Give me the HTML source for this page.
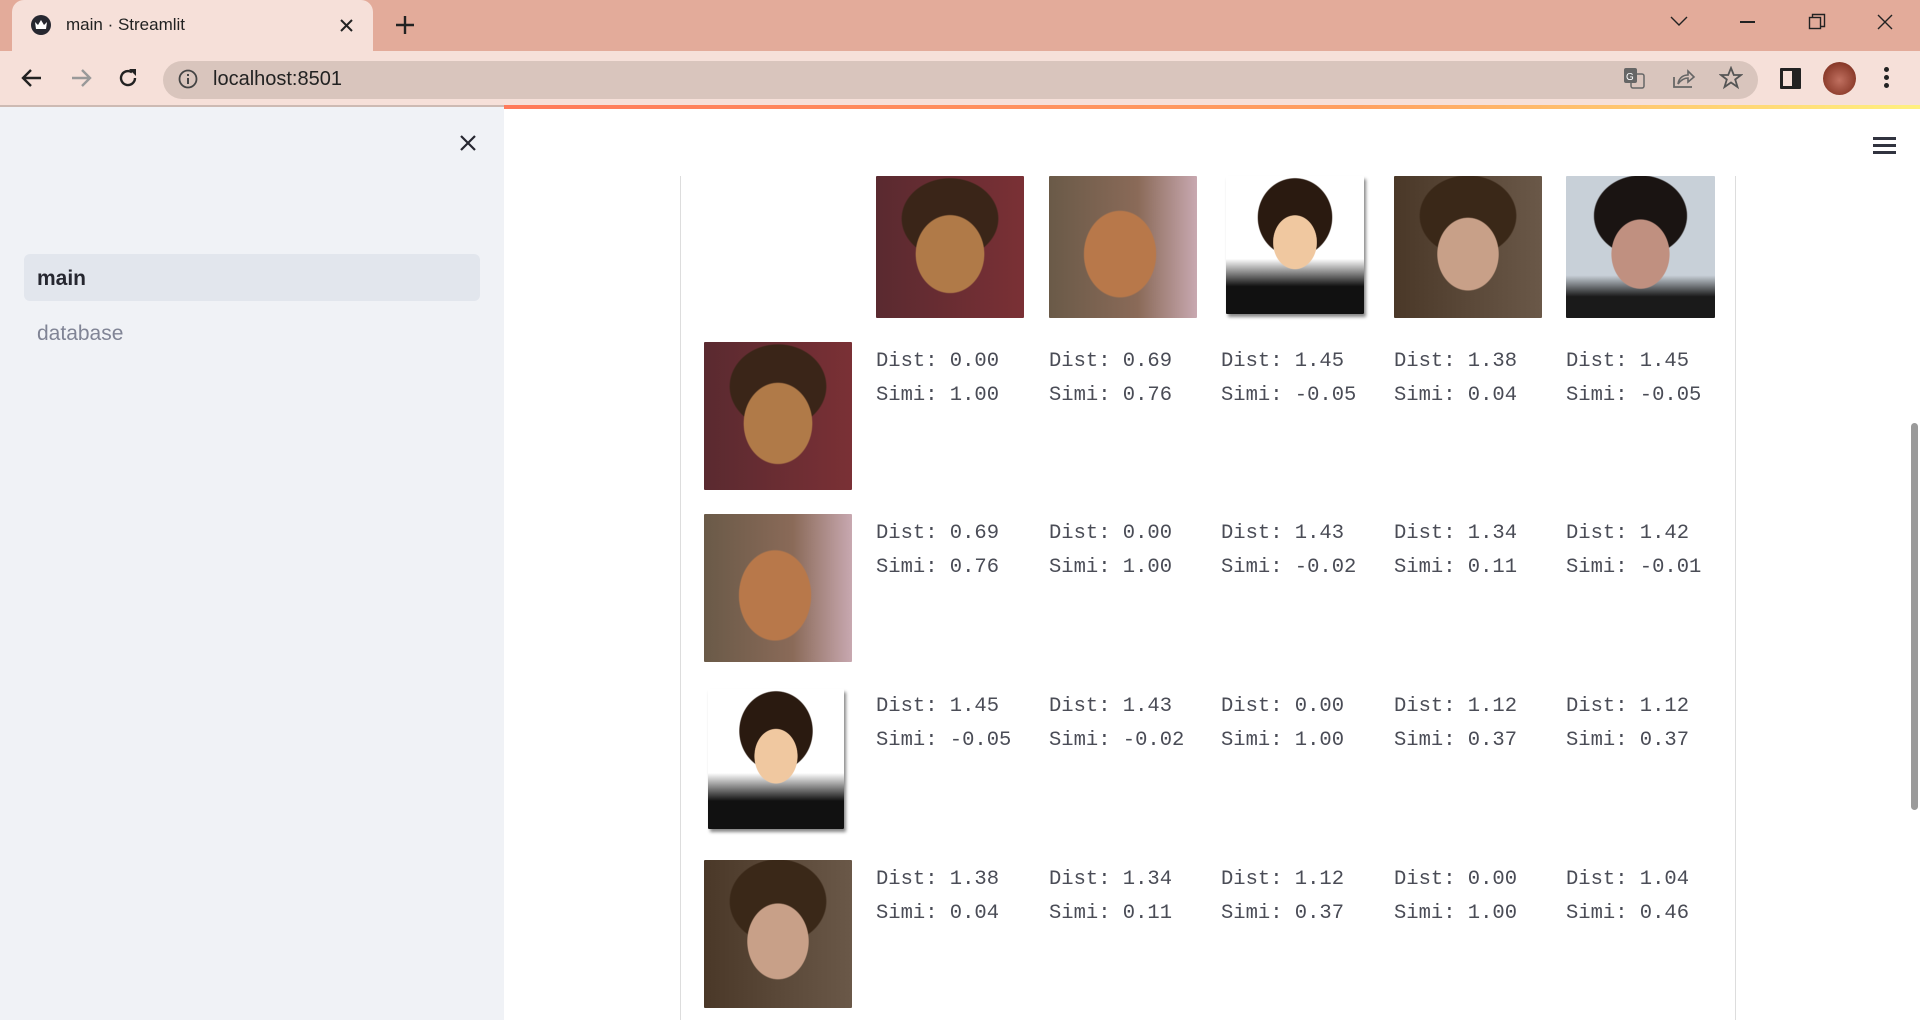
<!DOCTYPE html>
<html><head><meta charset="utf-8"><style>
*{margin:0;padding:0;box-sizing:border-box}
body{width:1920px;height:1020px;overflow:hidden;background:#fff;font-family:"Liberation Sans",sans-serif;position:relative}
.abs{position:absolute}
.tabbar{left:0;top:0;width:1920px;height:51px;background:#e3ab9a}
.tab{left:12px;top:0;width:361px;height:51px;background:#f6e0d9;border-radius:12px 12px 0 0}
.toolbar{left:0;top:51px;width:1920px;height:54px;background:#f6e0d9}
.url{left:163px;top:61px;width:1595px;height:38px;background:#d9c5bd;border-radius:19px}
.side{left:0;top:105px;width:504px;height:915px;background:#f0f2f6;border-top:2px solid #cdbab3}
.mono{font-family:"Liberation Mono",monospace;font-size:20.5px;color:#4a4c56;line-height:34px;white-space:pre}
.face{border-radius:1px}
.f1{background:radial-gradient(ellipse 38% 45% at 50% 55%,#b07a48 60%,transparent 62%),radial-gradient(ellipse 46% 40% at 50% 30%,#3a2518 70%,transparent 72%),linear-gradient(90deg,#5a2a30,#7a3035)}
.f2{background:radial-gradient(ellipse 40% 50% at 48% 55%,#b8784a 60%,transparent 62%),linear-gradient(90deg,#6a5a48,#8a6a58 60%,#c8a8b0)}
.f3{background:radial-gradient(ellipse 26% 32% at 50% 48%,#f0c8a0 60%,transparent 62%),radial-gradient(ellipse 38% 40% at 50% 30%,#2a1a10 70%,transparent 72%),linear-gradient(180deg,#fff 60%,#111 80%)}
.f4{background:radial-gradient(ellipse 34% 42% at 50% 55%,#c8a088 60%,transparent 62%),radial-gradient(ellipse 46% 40% at 50% 28%,#3a2818 70%,transparent 72%),linear-gradient(90deg,#4a3828,#6a5848)}
.f5{background:radial-gradient(ellipse 32% 40% at 50% 55%,#c09080 60%,transparent 62%),radial-gradient(ellipse 44% 40% at 50% 28%,#1a1412 70%,transparent 72%),linear-gradient(180deg,#c8d0d8 70%,#1a1a1a 85%)}
</style></head><body>
<div class="abs tabbar"></div>
<div class="abs tab"></div>
<div class="abs" style="left:31px;top:15px;width:20px;height:20px;border-radius:50%;background:#262730"></div>
<svg class="abs" style="left:35px;top:20px" width="12" height="9"><path d="M0 2 L3 5 L6 0 L9 5 L12 2 L11 9 L1 9Z" fill="#fff"/></svg>
<div class="abs" style="left:66px;top:15px;font-size:17px;color:#222">main · Streamlit</div>
<svg class="abs" style="left:340px;top:19px" width="13" height="13"><path d="M1 1L12 12M12 1L1 12" stroke="#222" stroke-width="2"/></svg>
<svg class="abs" style="left:395px;top:15px" width="20" height="20"><path d="M10 1V19M1 10H19" stroke="#222" stroke-width="2.4"/></svg>
<svg class="abs" style="left:1670px;top:15px" width="18" height="12"><path d="M1 2L9 10L17 2" stroke="#222" stroke-width="1.4" fill="none"/></svg>
<div class="abs" style="left:1740px;top:21px;width:15px;height:1.5px;background:#222"></div>
<svg class="abs" style="left:1808px;top:13px" width="18" height="18"><rect x="1.5" y="4.5" width="11" height="11" stroke="#222" fill="none" stroke-width="1.4"/><path d="M4.5 4.5V1.5H16.5V13.5H12.5" stroke="#222" fill="none" stroke-width="1.4"/></svg>
<svg class="abs" style="left:1877px;top:14px" width="16" height="16"><path d="M1 1L15 15M15 1L1 15" stroke="#222" stroke-width="1.4"/></svg>
<div class="abs toolbar"></div>
<div class="abs url"></div>
<svg class="abs" style="left:20px;top:66px" width="24" height="24"><path d="M21 12H4M11 4L3 12L11 20" stroke="#222" stroke-width="2.4" fill="none"/></svg>
<svg class="abs" style="left:69px;top:66px" width="24" height="24"><path d="M3 12H20M13 4L21 12L13 20" stroke="#999" stroke-width="2.4" fill="none"/></svg>
<svg class="abs" style="left:116px;top:66px" width="24" height="24"><path d="M19 12A7 7 0 1 1 16 6.3" stroke="#222" stroke-width="2.4" fill="none"/><path d="M13 3H20V10Z" fill="#222"/></svg>
<svg class="abs" style="left:178px;top:69px" width="20" height="20"><circle cx="10" cy="10" r="8.5" stroke="#444" stroke-width="1.8" fill="none"/><path d="M10 9V15M10 5V7" stroke="#444" stroke-width="2"/></svg>
<div class="abs" style="left:213px;top:68px;font-size:20px;color:#222">localhost:8501</div>
<svg class="abs" style="left:1623px;top:67px" width="22" height="22"><rect x="1" y="1" width="13" height="15" rx="2" fill="#666"/><rect x="8" y="7" width="13" height="14" rx="2" fill="none" stroke="#666" stroke-width="1.5"/><text x="3" y="13" font-size="10" fill="#fff" font-family="Liberation Sans">G</text></svg>
<svg class="abs" style="left:1672px;top:67px" width="24" height="22"><path d="M2 10V20H20" stroke="#666" stroke-width="1.8" fill="none"/><path d="M6 17C7 10 12 8 16 8V4L22 10L16 15V11C12 11 9 13 6 17Z" stroke="#666" stroke-width="1.6" fill="none"/></svg>
<svg class="abs" style="left:1719px;top:66px" width="24" height="24"><path d="M12 2L14.8 9H22L16.2 13.5L18.5 21L12 16.5L5.5 21L7.8 13.5L2 9H9.2Z" stroke="#555" stroke-width="1.8" fill="none"/></svg>
<div class="abs" style="left:1780px;top:68px;width:21px;height:21px;border:3px solid #222;border-right-width:9px;border-radius:1px"></div>
<div class="abs" style="left:1823px;top:62px;width:33px;height:33px;border-radius:50%;background:radial-gradient(circle at 50% 55%,#c07060,#8a3a2a 70%,#5a2418)"></div>
<div class="abs" style="left:1884px;top:67px;width:5px;height:5px;border-radius:50%;background:#222;box-shadow:0 8px 0 #222,0 16px 0 #222"></div>
<div class="abs side"></div>
<div class="abs" style="left:504px;top:105px;width:1416px;height:4px;background:linear-gradient(90deg,#ff7a5a,#ffa060 60%,#fff080)"></div>
<svg class="abs" style="left:459px;top:134px" width="18" height="18"><path d="M2 2L16 16M16 2L2 16" stroke="#262730" stroke-width="2.2"/></svg>
<div class="abs" style="left:24px;top:254px;width:456px;height:47px;background:#e2e6ed;border-radius:6px"></div>
<div class="abs" style="left:37px;top:267px;font-size:21px;font-weight:bold;color:#262730">main</div>
<div class="abs" style="left:37px;top:322px;font-size:21px;color:#808495">database</div>
<div class="abs" style="left:1873px;top:137px;width:23px;height:3px;background:#31333f;box-shadow:0 7px 0 #31333f,0 14px 0 #31333f"></div>
<div class="abs" style="left:680px;top:176px;width:1px;height:844px;background:#ddd"></div>
<div class="abs" style="left:1735px;top:176px;width:1px;height:844px;background:#ddd"></div>
<div class="abs" style="left:1911px;top:423px;width:7px;height:387px;background:#9a9a9a;border-radius:4px"></div>

<div class="abs face f1" style="left:876px;top:176px;width:148px;height:142px"></div>
<div class="abs face f2" style="left:1049px;top:176px;width:148px;height:142px"></div>
<div class="abs face f3" style="left:1226px;top:176px;width:138px;height:138px;box-shadow:2px 3px 3px #888"></div>
<div class="abs face f4" style="left:1394px;top:176px;width:148px;height:142px"></div>
<div class="abs face f5" style="left:1566px;top:176px;width:149px;height:142px"></div>

<div class="abs face f1" style="left:704px;top:342px;width:148px;height:148px"></div>
<div class="abs face f2" style="left:704px;top:514px;width:148px;height:148px"></div>
<div class="abs face f3" style="left:708px;top:689px;width:136px;height:140px;box-shadow:2px 3px 3px #888"></div>
<div class="abs face f4" style="left:704px;top:860px;width:148px;height:148px"></div>

<div class="abs mono" style="left:876px;top:345px">Dist: 0.00
Simi: 1.00</div>
<div class="abs mono" style="left:1049px;top:345px">Dist: 0.69
Simi: 0.76</div>
<div class="abs mono" style="left:1221px;top:345px">Dist: 1.45
Simi: -0.05</div>
<div class="abs mono" style="left:1394px;top:345px">Dist: 1.38
Simi: 0.04</div>
<div class="abs mono" style="left:1566px;top:345px">Dist: 1.45
Simi: -0.05</div>

<div class="abs mono" style="left:876px;top:517px">Dist: 0.69
Simi: 0.76</div>
<div class="abs mono" style="left:1049px;top:517px">Dist: 0.00
Simi: 1.00</div>
<div class="abs mono" style="left:1221px;top:517px">Dist: 1.43
Simi: -0.02</div>
<div class="abs mono" style="left:1394px;top:517px">Dist: 1.34
Simi: 0.11</div>
<div class="abs mono" style="left:1566px;top:517px">Dist: 1.42
Simi: -0.01</div>

<div class="abs mono" style="left:876px;top:690px">Dist: 1.45
Simi: -0.05</div>
<div class="abs mono" style="left:1049px;top:690px">Dist: 1.43
Simi: -0.02</div>
<div class="abs mono" style="left:1221px;top:690px">Dist: 0.00
Simi: 1.00</div>
<div class="abs mono" style="left:1394px;top:690px">Dist: 1.12
Simi: 0.37</div>
<div class="abs mono" style="left:1566px;top:690px">Dist: 1.12
Simi: 0.37</div>

<div class="abs mono" style="left:876px;top:863px">Dist: 1.38
Simi: 0.04</div>
<div class="abs mono" style="left:1049px;top:863px">Dist: 1.34
Simi: 0.11</div>
<div class="abs mono" style="left:1221px;top:863px">Dist: 1.12
Simi: 0.37</div>
<div class="abs mono" style="left:1394px;top:863px">Dist: 0.00
Simi: 1.00</div>
<div class="abs mono" style="left:1566px;top:863px">Dist: 1.04
Simi: 0.46</div>
</body></html>
